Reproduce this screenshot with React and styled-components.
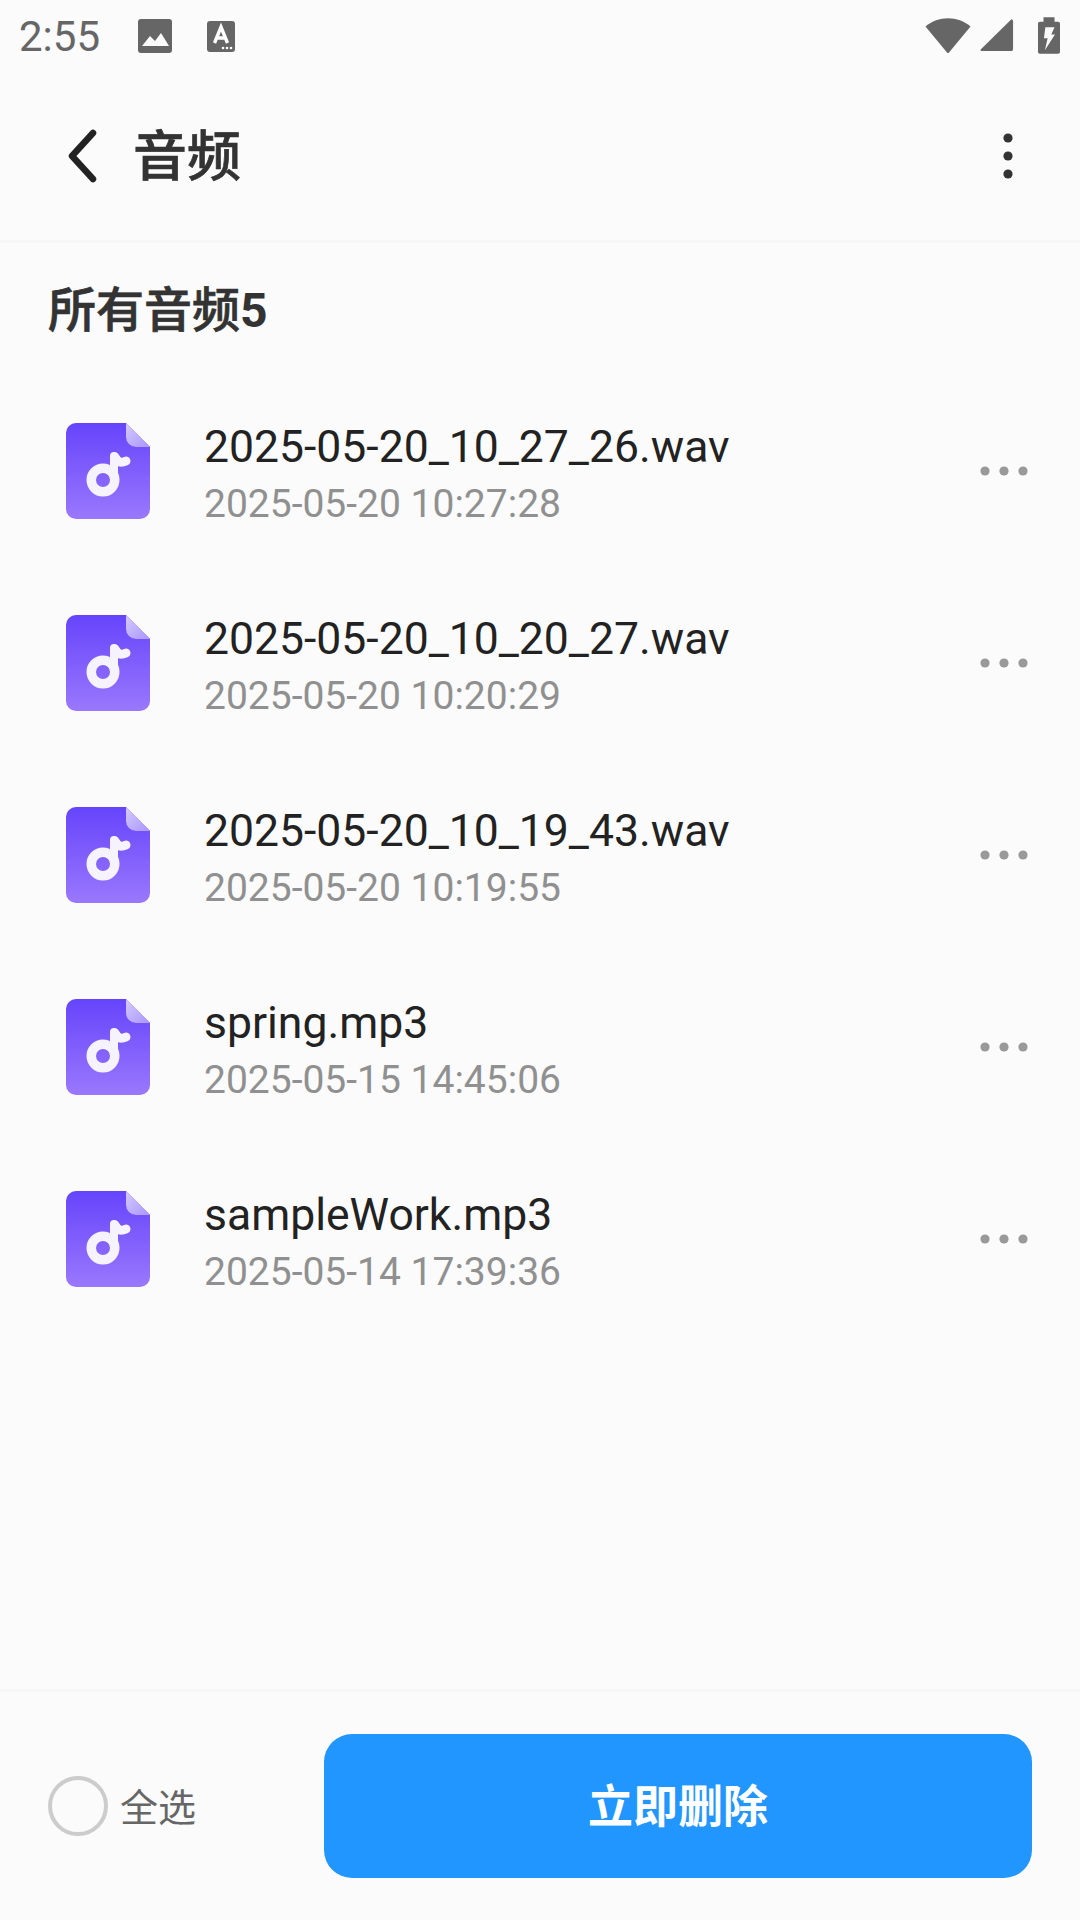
import React from "react";
import styled, { createGlobalStyle } from "styled-components";

const Global = createGlobalStyle`
  html, body { margin: 0; padding: 0; background: #fbfbfb; }
  * { box-sizing: border-box; }
`;
const CJK = `Roboto, "Noto Sans CJK SC", sans-serif`;

const Page = styled.div`
  width: 1080px; height: 1920px; background: #fbfbfb; display: flex; flex-direction: column;
  font-family: ${CJK}; overflow: hidden;
`;
const StatusBar = styled.div`
  height: 72px; flex: none; display: flex; align-items: center; padding: 0 20px 0 19px; color: #666;
`;
const Clock = styled.span`
  font-size: 42px; line-height: 72px; color: #666; width: 84px; margin-top: 2px;
`;
const StatusLeft = styled.div`display: flex; align-items: center; gap: 34px; flex: 1;`;
const StatusRight = styled.div`display: flex; align-items: center; gap: 9px; margin-top: -2px;`;
const Header = styled.header`
  height: 171px; flex: none; border-bottom: 3px solid #f6f6f6; display: flex; align-items: center;
  padding: 0 62px 0 62px;
`;
const BackIcon = styled.svg`width: 38px; height: 56px; flex: none;`;
const HeaderTitle = styled.h1`
  flex: 1; margin: 4px 0 0 33px; font-size: 54px; font-weight: 500; color: #333; line-height: 72px;
  -webkit-text-stroke: 0.7px #333;
`;
const SectionTitle = styled.h2`
  margin: 0; padding: 35px 48px 0; font-size: 48px; font-weight: 500; color: #333; line-height: 66px;
  font-family: ${CJK}; -webkit-text-stroke: 0.7px #333;
`;
const Count = styled.span`font-weight: 700; -webkit-text-stroke: 0;`;
const List = styled.ul`list-style: none; margin: 31px 0 0; padding: 0; display: flex; flex-direction: column;`;
const Row = styled.li`
  height: 192px; display: flex; align-items: center; padding: 0 52px 0 66px;
`;
const FileBody = styled.div`flex: 1; margin: 10px 0 0 54px; display: flex; flex-direction: column;`;
const FileName = styled.div`font-size: 44.5px; line-height: 57px; color: #222;`;
const FileTime = styled.div`font-size: 39px; line-height: 57px; color: #909090;`;
const Spacer = styled.div`flex: 1;`;
const Footer = styled.footer`
  height: 231px; flex: none; border-top: 3px solid #f6f6f6; display: flex; align-items: flex-start;
  padding: 42px 48px 0;
`;
const SelectAll = styled.label`display: flex; align-items: center; height: 144px; width: 276px;`;
const Circle = styled.span`
  width: 60px; height: 60px; border-radius: 50%; border: 4px solid #ccc; flex: none;
`;
const SelectText = styled.span`font-size: 38px; color: #666; margin: -4px 0 0 12px;`;
const DeleteButton = styled.button`
  width: 708px; height: 144px; background: #2196ff; color: #fff; border: 0; border-radius: 28px;
  padding: 0 0 5px; font-family: ${CJK}; font-size: 45px; font-weight: 700;
`;

const Dots = styled.svg`width: 48px; height: 12px; flex: none;`;

const AudioIcon = ({ id }) => (
  <svg width="84" height="96" viewBox="0 0 84 96" style={{ flex: "none" }}>
    <defs>
      <linearGradient id={id} x1="0" y1="0" x2="0" y2="1">
        <stop offset="0" stopColor="#6644fb" />
        <stop offset="1" stopColor="#9a78fd" />
      </linearGradient>
      <linearGradient id={id + "f"} x1="0" y1="0" x2="1" y2="1">
        <stop offset="0" stopColor="#d5cbfe" />
        <stop offset="1" stopColor="#a996fb" />
      </linearGradient>
    </defs>
    <path d="M10 0H60L84 24V86A10 10 0 0 1 74 96H10A10 10 0 0 1 0 86V10A10 10 0 0 1 10 0Z" fill={`url(#${id})`} />
    <path d="M60 0L84 24H70A10 10 0 0 1 60 14Z" fill={`url(#${id + "f"})`} />
    <circle cx="37" cy="57" r="11.75" fill="none" stroke="#f6f3ff" strokeWidth="9.5" />
    <path d="M48 57V33" stroke="#f6f3ff" strokeWidth="8" strokeLinecap="round" fill="none" />
    <path d="M49 34C52 40 56 40 60 38" stroke="#f6f3ff" strokeWidth="9" strokeLinecap="round" fill="none" />
  </svg>
);

const files = [
  ["2025-05-20_10_27_26.wav", "2025-05-20 10:27:28"],
  ["2025-05-20_10_20_27.wav", "2025-05-20 10:20:29"],
  ["2025-05-20_10_19_43.wav", "2025-05-20 10:19:55"],
  ["spring.mp3", "2025-05-15 14:45:06"],
  ["sampleWork.mp3", "2025-05-14 17:39:36"],
];

export default function App() {
  return (
    <Page>
      <Global />
      <StatusBar>
        <StatusLeft>
          <Clock>2:55</Clock>
          <svg width="36" height="36" viewBox="0 0 36 36">
            <rect width="34" height="34" x="1" y="1" rx="3" fill="#666" />
            <path d="M5 28L13 18L18 23L24 15L32 28Z" fill="#fbfbfb" />
          </svg>
          <svg width="28" height="31" viewBox="0 0 28 31">
            <rect width="28" height="31" rx="3" fill="#666" />
            <path d="M7.5 22L14 6L20.5 22M9.5 17H18.5" stroke="#fff" strokeWidth="3.4" fill="none" />
            <circle cx="16" cy="27" r="1.3" fill="#fff" /><circle cx="20" cy="27" r="1.3" fill="#fff" /><circle cx="24" cy="27" r="1.3" fill="#fff" />
          </svg>
        </StatusLeft>
        <StatusRight>
          <svg width="46" height="37" viewBox="0 0 46 37">
            <path d="M0.5 9.5C13 -1.5 33 -1.5 45.5 9.5L24 35.5Q23 36.5 22 35.5Z" fill="#666" />
          </svg>
          <svg width="34" height="34" viewBox="0 0 36 36">
            <path d="M1 33L33 1.5Q34.5 1 35 3V32Q35 35 33 35H2Q-0.5 35 1 33Z" fill="#666" />
          </svg>
          <svg width="22" height="39" viewBox="0 0 24 40" style={{ marginLeft: 15 }}>
            <path d="M6 0H18V5H22Q24 5 24 7V38Q24 40 22 40H2Q0 40 0 38V7Q0 5 2 5H6Z" fill="#666" />
            <path d="M8 11H18L14.5 19H18.5L7.5 36L10.5 23H6.5Z" fill="#fbfbfb" />
          </svg>
        </StatusRight>
      </StatusBar>
      <Header>
        <BackIcon viewBox="0 0 38 56">
          <path d="M31 5L10 28L31 51" fill="none" stroke="#222" strokeWidth="6.5" strokeLinecap="round" strokeLinejoin="round" />
        </BackIcon>
        <HeaderTitle>音频</HeaderTitle>
        <svg width="20" height="48" viewBox="0 0 20 48">
          <circle cx="10" cy="6" r="4.6" fill="#333" /><circle cx="10" cy="24" r="4.6" fill="#333" /><circle cx="10" cy="42" r="4.6" fill="#333" />
        </svg>
      </Header>
      <SectionTitle>所有音频<Count>5</Count></SectionTitle>
      <List>
        {files.map(([name, time], i) => (
          <Row key={name}>
            <AudioIcon id={`audio-${i}`} />
            <FileBody>
              <FileName>{name}</FileName>
              <FileTime>{time}</FileTime>
            </FileBody>
            <Dots viewBox="0 0 48 12">
              <circle cx="5" cy="6" r="4.6" fill="#999" /><circle cx="24" cy="6" r="4.6" fill="#999" /><circle cx="43" cy="6" r="4.6" fill="#999" />
            </Dots>
          </Row>
        ))}
      </List>
      <Spacer />
      <Footer>
        <SelectAll>
          <Circle />
          <SelectText>全选</SelectText>
        </SelectAll>
        <DeleteButton>立即删除</DeleteButton>
      </Footer>
    </Page>
  );
}
